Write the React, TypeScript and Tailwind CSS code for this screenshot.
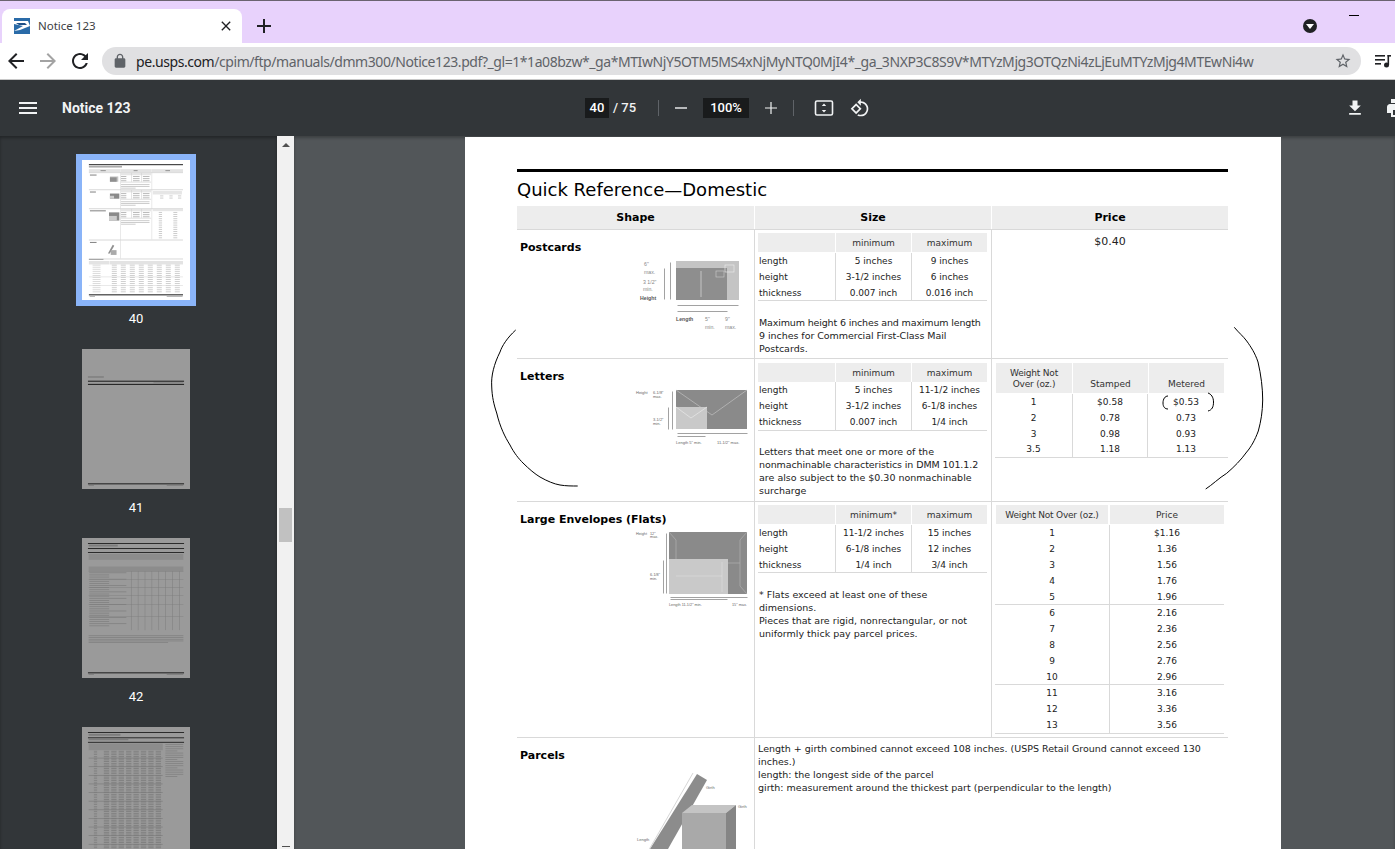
import React from "react";

const P = {
  menu: "M3 18h18v-2H3v2zm0-5h18v-2H3v2zm0-7v2h18V6H3z",
  lock: "M18 8h-1V6c0-2.76-2.24-5-5-5S7 3.24 7 6v2H6c-1.1 0-2 .9-2 2v10c0 1.1.9 2 2 2h12c1.1 0 2-.9 2-2V10c0-1.1-.9-2-2-2zM9 6c0-1.66 1.34-3 3-3s3 1.34 3 3v2H9V6z",
  back: "M20 11H7.83l5.59-5.59L12 4l-8 8 8 8 1.41-1.41L7.83 13H20v-2z",
  forward: "M12 4l-1.41 1.41L16.17 11H4v2h12.17l-5.58 5.59L12 20l8-8z",
  refresh: "M17.65 6.35C16.2 4.9 14.21 4 12 4c-4.42 0-7.99 3.58-7.99 8s3.57 8 7.99 8c3.73 0 6.84-2.55 7.73-6h-2.08c-.82 2.33-3.04 4-5.65 4-3.31 0-6-2.69-6-6s2.69-6 6-6c1.66 0 3.14.69 4.22 1.78L13 11h7V4l-2.35 2.35z",
  star: "M22 9.24l-7.19-.62L12 2 9.19 8.63 2 9.24l5.46 4.73L5.82 21 12 17.27 18.18 21l-1.63-7.03L22 9.24zM12 15.4l-3.76 2.27 1-4.28-3.32-2.88 4.38-.38L12 6.1l1.71 4.04 4.38.38-3.32 2.88 1 4.28L12 15.4z",
  download: "M19 9h-4V3H9v6H5l7 7 7-7zM5 18v2h14v-2H5z",
  print: "M19 8H5c-1.66 0-3 1.34-3 3v6h4v4h12v-4h4v-6c0-1.66-1.34-3-3-3zm-3 11H8v-5h8v5zm3-7c-.55 0-1-.45-1-1s.45-1 1-1 1 .45 1 1-.45 1-1 1zm-1-9H6v4h12V3z",
  rotate: "M7.34 6.41L.86 12.9l6.49 6.48 6.49-6.48-6.5-6.49zM3.69 12.9l3.66-3.66L11 12.9l-3.66 3.66-3.65-3.66zm15.67-6.26C17.61 4.88 15.3 4 13 4V.76L8.76 5 13 9.24V6c1.79 0 3.58.68 4.95 2.05 2.73 2.73 2.73 7.17 0 9.9C16.58 19.32 14.79 20 13 20c-.97 0-1.94-.21-2.84-.61l-1.49 1.49C10.02 21.62 11.51 22 13 22c2.3 0 4.61-.88 6.36-2.64 3.52-3.51 3.52-9.21 0-12.72z",
  plus: "M19 13h-6v6h-2v-6H5v-2h6V5h2v6h6v2z",
  plusThin: "M18 12.6h-5.4V18h-1.2v-5.4H6v-1.2h5.4V6h1.2v5.4H18z",
  minus: "M18 12.7H6v-1.4h12z",
  close: "M19 6.41L17.59 5 12 10.59 6.41 5 5 6.41 10.59 12 5 17.59 6.41 19 12 13.41 17.59 19 19 17.59 13.41 12z",
};

function Ic({ d, s = 24, c = "" }: { d: string; s?: number; c?: string }) {
  return (
    <svg viewBox="0 0 24 24" width={s} height={s} fill="currentColor" className={"shrink-0 " + c}>
      <path d={d} />
    </svg>
  );
}

function Thumb40() {
  const g = "#cfcfcf";
  const lines: React.ReactNode[] = [];
  for (let i = 0; i < 3; i++) {
    const ys = [97, 226, 369][i];
    lines.push(<rect key={"h" + i} x={293} y={ys} width={229} height={18} fill="#e6e6e6" />);
    for (let r = 0; r < 3; r++) {
      lines.push(<rect key={"a" + i + r} x={295} y={ys + 24 + r * 16} width={40} height={7} fill="#b5b5b5" />);
      lines.push(<rect key={"b" + i + r} x={385} y={ys + 24 + r * 16} width={50} height={7} fill="#b5b5b5" />);
      lines.push(<rect key={"c" + i + r} x={460} y={ys + 24 + r * 16} width={50} height={7} fill="#b5b5b5" />);
    }
    lines.push(<rect key={"v" + i} x={373} y={ys} width={4} height={68} fill={g} />);
    lines.push(<rect key={"w" + i} x={449} y={ys} width={4} height={68} fill={g} />);
    lines.push(<rect key={"l" + i} x={293} y={ys + 67} width={229} height={5} fill={g} />);
    for (let r = 0; r < 3; r++) {
      lines.push(<rect key={"p" + i + r} x={295} y={ys + 86 + r * 13} width={r === 2 ? 110 : 215} height={6} fill="#c0c0c0" />);
    }
  }
  const rows: React.ReactNode[] = [];
  for (let r = 0; r < 14; r++) {
    const y = 790 + r * 15.5;
    rows.push(<rect key={"t" + r} x={80} y={y} width={60} height={6} fill="#d2d2d2" />);
    for (let k = 0; k < 8; k++) rows.push(<rect key={"t" + r + k} x={225 + k * 68} y={y} width={38} height={6} fill="#c4c4c4" />);
  }
  return (
    <svg viewBox="0 0 816 1056" width={108} height={140} preserveAspectRatio="none" className="block bg-white blur-[0.3px]">
      <rect x={52} y={32} width={711} height={7} fill="#111" />
      <rect x={52} y={44} width={250} height={13} fill="#aaa" />
      <rect x={52} y={69} width={237} height={23} fill="#e3e3e3" />
      <rect x={290} y={69} width={236} height={23} fill="#e3e3e3" />
      <rect x={527} y={69} width={236} height={23} fill="#e3e3e3" />
      <rect x={140} y={76} width={40} height={8} fill="#999" />
      <rect x={390} y={76} width={30} height={8} fill="#999" />
      <rect x={630} y={76} width={35} height={8} fill="#999" />
      {[92, 221, 364, 600, 743].map((y) => <rect key={y} x={52} y={y} width={711} height={7} fill="#d6d6d6" />)}
      <rect x={289} y={92} width={4} height={651} fill="#d6d6d6" />
      <rect x={526} y={92} width={4} height={508} fill="#d6d6d6" />
      <rect x={60} y={110} width={50} height={7} fill="#777" />
      <rect x={60} y={238} width={45} height={7} fill="#777" />
      <rect x={60} y={380} width={120} height={7} fill="#777" />
      <rect x={60} y={618} width={50} height={7} fill="#777" />
      <rect x={211} y={124} width={63} height={40} fill="#c4c4c4" /><rect x={211} y={131} width={51} height={33} fill="#8f8f8f" />
      <rect x={211} y={253} width={71} height={39} fill="#8a8a8a" /><rect x={211} y={270} width={31} height={22} fill="#ccc" />
      <rect x={204} y={395} width={78} height={62} fill="#8a8a8a" /><rect x={204} y={422} width={59} height={35} fill="#ccc" />
      <polygon points="232,640 244,646 210,705 196,705" fill="#8f8f8f" />
      <rect x={217} y={680} width={44} height={36} fill="#aaa" />
      {lines}
      <rect x={535} y={234} width={220} height={26} fill="#e6e6e6" />
      <rect x={535} y={368} width={228} height={18} fill="#e6e6e6" />
      {Array.from({ length: 13 }).map((_, i) => (
        <React.Fragment key={i}>
          <rect x={580} y={392 + i * 16} width={25} height={6} fill="#c0c0c0" />
          <rect x={690} y={392 + i * 16} width={30} height={6} fill="#c0c0c0" />
        </React.Fragment>
      ))}
      {[0, 1].map((i) => (
        <React.Fragment key={i}>
          <rect x={590} y={268 + i * 16} width={25} height={6} fill="#c0c0c0" />
          <rect x={660} y={268 + i * 16} width={25} height={6} fill="#c0c0c0" />
          <rect x={725} y={268 + i * 16} width={25} height={6} fill="#c0c0c0" />
        </React.Fragment>
      ))}
      <rect x={52} y={746} width={110} height={7} fill="#999" />
      <rect x={52} y={762} width={155} height={26} fill="#e3e3e3" />
      <rect x={210} y={762} width={553} height={26} fill="#e3e3e3" />
      {rows}
      {[880, 945].map((y) => <rect key={y} x={52} y={y} width={711} height={4} fill="#d6d6d6" />)}
      <rect x={52} y={1013} width={711} height={8} fill="#222" />
      <rect x={58} y={1027} width={40} height={6} fill="#aaa" />
      <rect x={640} y={1027} width={120} height={6} fill="#aaa" />
    </svg>
  );
}

function ThumbDim({ page }: { page: 41 | 42 | 43 }) {
  const ink = "#222";
  const soft = "#7c7c7c";
  const parts: React.ReactNode[] = [];
  if (page === 41) {
    parts.push(<rect key="a" x={45} y={206} width={120} height={10} fill={soft} />);
    parts.push(<rect key="b" x={45} y={239} width={726} height={8} fill={ink} />);
    parts.push(<rect key="c" x={45} y={263} width={726} height={8} fill={ink} />);
    parts.push(<rect key="d" x={540} y={252} width={225} height={6} fill={soft} />);
  }
  if (page === 42) {
    [38, 76, 106].forEach((y) => parts.push(<rect key={y} x={45} y={y} width={726} height={7} fill={ink} />));
    parts.push(<rect key="t" x={50} y={50} width={220} height={14} fill={soft} />);
    parts.push(<rect key="h1" x={50} y={120} width={716} height={45} fill="#8c8c8c" />);
    parts.push(<rect key="h2" x={50} y={215} width={716} height={36} fill="#8c8c8c" />);
    for (let i = 0; i < 26; i++) parts.push(<rect key={"l" + i} x={55} y={260 + i * 16} width={i % 3 ? 150 : 280} height={5} fill={soft} />);
    for (let k = 0; k < 8; k++) parts.push(<rect key={"v" + k} x={370 + k * 52} y={250} width={4} height={445} fill="#7f7f7f" />);
    for (let i = 0; i < 6; i++) parts.push(<rect key={"r" + i} x={50} y={[251, 310, 370, 430, 500, 590][i]} width={716} height={3} fill={soft} />);
    for (let i = 0; i < 5; i++) parts.push(<rect key={"x" + i} x={50} y={735 + i * 13} width={i === 4 ? 600 : 716} height={5} fill={soft} />);
  }
  if (page === 43) {
    [38, 78, 112].forEach((y) => parts.push(<rect key={y} x={45} y={y} width={726} height={7} fill={ink} />));
    parts.push(<rect key="t" x={50} y={52} width={240} height={14} fill={soft} />);
    parts.push(<rect key="u" x={50} y={90} width={300} height={10} fill={soft} />);
    parts.push(<rect key="h" x={50} y={125} width={560} height={50} fill="#8c8c8c" />);
    for (let i = 0; i < 60; i++) {
      parts.push(<rect key={"r" + i} x={50} y={180 + i * 13} width={560} height={i % 5 === 4 ? 5 : 0} fill={soft} />);
      for (let k = 0; k < 8; k++) parts.push(<rect key={"c" + i + k} x={165 + k * 56} y={180 + i * 13} width={40} height={6} fill={soft} />);
      parts.push(<rect key={"w" + i} x={90} y={180 + i * 13} width={24} height={5} fill={soft} />);
    }
    for (let i = 0; i < 16; i++) parts.push(<rect key={"s" + i} x={630} y={130 + i * 16} width={i % 4 === 3 ? 90 : 135} height={5} fill={soft} />);
  }
  if (page !== 43) {
    parts.push(<rect key="f" x={45} y={1013} width={726} height={8} fill={ink} />);
    parts.push(<rect key="g" x={50} y={1027} width={40} height={6} fill={soft} />);
    parts.push(<rect key="h3" x={640} y={1027} width={125} height={6} fill={soft} />);
  }
  return (
    <svg viewBox="0 0 816 1056" width={108} height={140} preserveAspectRatio="none" className="block bg-[#9a9a9a] blur-[0.3px]">
      {parts}
    </svg>
  );
}

function Thumb({ n, active, children }: { n?: number; active?: boolean; children: React.ReactNode }) {
  return (
    <div className="ml-[76px] w-[120px] h-[189px] shrink-0 flex flex-col items-center">
      <div className={active ? "border-[6px] border-[#8ab4f8]" : "border-[6px] border-transparent"}>{children}</div>
      {n ? <div className="mt-[5px] h-[16px] leading-[16px] text-[13px] text-white font-['Roboto',sans-serif]">{n}</div> : null}
    </div>
  );
}

const LBL = "pt-[11px] pl-[3px] text-[11px] leading-[14px] font-bold text-black";

function SizeTable({ head, rows, tight }: { head: string; rows: string[][]; tight?: boolean }) {
  return (
    <div className="w-[229px] text-[9px]">
      <div className="flex h-[19px] leading-[20px] text-center text-[#333]">
        <div className="w-[77px] bg-[#ededed] mr-px" />
        <div className="w-[75px] bg-[#ededed] mr-px">{head}</div>
        <div className="w-[75px] bg-[#ededed]">maximum</div>
      </div>
      <div className={(tight ? "" : "mt-px ") + "border-b border-[#d9d9d9]"}>
        {rows.map((r, i) => (
          <div key={i} className={"flex text-[#222] leading-[16px] " + (i === 2 && !tight ? "h-[15px]" : "h-[16px]")}>
            <div className="w-[78px] pl-[1px] border-r border-[#d9d9d9]">{r[0]}</div>
            <div className="w-[76px] text-center border-r border-[#d9d9d9]">{r[1]}</div>
            <div className="w-[75px] text-center">{r[2]}</div>
          </div>
        ))}
      </div>
    </div>
  );
}

function Para({ children, tight }: { children: React.ReactNode; tight?: boolean }) {
  return <div className={(tight ? "mt-[14px]" : "mt-[15px]") + " pl-[1px] leading-[13px] text-[#222] whitespace-nowrap"}>{children}</div>;
}

const flats = [
  [["1", "$1.16"], ["2", "1.36"], ["3", "1.56"], ["4", "1.76"], ["5", "1.96"]],
  [["6", "2.16"], ["7", "2.36"], ["8", "2.56"], ["9", "2.76"], ["10", "2.96"]],
  [["11", "3.16"], ["12", "3.36"], ["13", "3.56"]],
];

export default function App() {
  return (
    <div className="w-full h-[849px] overflow-hidden flex flex-col bg-white font-['Noto_Sans',sans-serif]">
      <div className="h-px bg-[#6b6370]" />
      {/* tab strip */}
      <div className="h-[42px] bg-[#e8d2fc] flex items-end pl-[2px] relative shrink-0">
        <div className="w-[240px] h-[34px] rounded-t-[8px] bg-white flex items-center pl-[12px] pr-[8px]">
          <svg viewBox="0 0 16 16" width={16} height={16} className="shrink-0">
            <rect width="16" height="16" fill="#2a6ba8" />
            <path d="M0 3 H14 L16 8 L6 12 L0 13 L9 8 L0 6 Z" fill="#fff" />
            <path d="M2 5 H11 L13 7 L5 7 Z" fill="#1f4f86" />
          </svg>
          <span className="ml-[8px] text-[11.5px] text-[#3c4043] flex-1">Notice 123</span>
          <Ic d={P.close} s={16} c="text-[#202124]" />
        </div>
        <div className="ml-[10px] mb-[5px] text-[#202124]"><Ic d={P.plus} s={24} /></div>
        <div className="absolute left-[1303px] top-[18px] w-[14px] h-[14px] rounded-full bg-[#202124] flex items-center justify-center">
          <div className="w-0 h-0 border-l-[4px] border-r-[4px] border-t-[5px] border-l-transparent border-r-transparent border-t-white" />
        </div>
        <div className="absolute left-[1349px] top-[14px] w-[10px] h-px bg-black" />
      </div>
      {/* address bar */}
      <div className="h-[37px] shrink-0 bg-white border-b border-[#c8c8c8] flex items-center text-[#202124]">
        <div className="ml-[4px]"><Ic d={P.back} s={24} /></div>
        <div className="ml-[8px] text-[#a3a3a3]"><Ic d={P.forward} s={24} /></div>
        <div className="ml-[8px]"><Ic d={P.refresh} s={24} /></div>
        <div className="ml-[10px] w-[1259px] shrink-0 h-[28px] rounded-full bg-[#e0e0e2] flex items-center pl-[10px]">
          <Ic d={P.lock} s={16} c="text-[#5f6368]" />
          <span className="ml-[8px] text-[14px] tracking-[-0.43px] whitespace-nowrap text-[#5f6368] font-['Noto_Sans',sans-serif]">
            <span className="text-[#202124]">pe.usps.com</span>/cpim/ftp/manuals/dmm300/Notice123.pdf?_gl=1*1a08bzw*_ga*MTIwNjY5OTM5MS4xNjMyNTQ0MjI4*_ga_3NXP3C8S9V*MTYzMjg3OTQzNi4zLjEuMTYzMjg4MTEwNi4w
          </span>
          <div className="flex-1" />
          <div className="mr-[9px] text-[#5f6368]"><Ic d={P.star} s={18} /></div>
        </div>
        <div className="ml-[13px]">
          <svg viewBox="0 0 18 18" width={18} height={18} fill="#202124">
            <rect x="1" y="3" width="10" height="1.6" /><rect x="1" y="7" width="10" height="1.6" /><rect x="1" y="11" width="6" height="1.6" />
            <rect x="13.5" y="3" width="1.6" height="10" /><rect x="13.5" y="3" width="3.5" height="1.6" /><circle cx="12.5" cy="13" r="2.5" />
          </svg>
        </div>
      </div>
      {/* pdf toolbar */}
      <div className="h-[56px] shrink-0 bg-[#323639] flex items-center text-white font-['Roboto',sans-serif] overflow-hidden">
        <div className="ml-[16px]"><Ic d={P.menu} s={24} c="text-[#f1f3f4]" /></div>
        <span className="ml-[22px] w-[523px] shrink-0 text-[14px] font-bold text-[#f1f3f4]">Notice 123</span>
        <span className="w-[24px] shrink-0 h-[20px] bg-[#191b1c] text-center text-[13px] leading-[20px] font-medium">40</span>
        <span className="ml-[4px] w-[25px] shrink-0 text-[13px] text-[#f1f3f4] font-medium">/ 75</span>
        <div className="ml-[20px] w-px h-[16px] bg-[#5f6368] shrink-0" />
        <div className="ml-[10px]"><Ic d={P.minus} s={24} c="text-[#f1f3f4]" /></div>
        <span className="ml-[10px] w-[46px] shrink-0 h-[20px] bg-[#191b1c] text-center text-[13px] leading-[20px] font-medium">100%</span>
        <div className="ml-[10px]"><Ic d={P.plusThin} s={24} c="text-[#f1f3f4]" /></div>
        <div className="ml-[10px] w-px h-[16px] bg-[#5f6368] shrink-0" />
        <div className="ml-[20px]">
          <svg viewBox="0 0 20 20" width={20} height={20} fill="none">
            <rect x="1.5" y="3" width="17" height="14" rx="1.5" stroke="#f1f3f4" strokeWidth="1.6" />
            <path d="M10 5.5 L12.2 8 H7.8 Z M10 14.5 L12.2 12 H7.8 Z" fill="#f1f3f4" />
          </svg>
        </div>
        <div className="ml-[16px]"><Ic d={P.rotate} s={20} c="text-[#f1f3f4]" /></div>
        <div className="ml-[475px]"><Ic d={P.download} s={20} c="text-[#f1f3f4]" /></div>
        <div className="ml-[20px]"><Ic d={P.print} s={24} c="text-[#f1f3f4]" /></div>
      </div>
      {/* body */}
      <div className="flex-1 flex min-h-0 overflow-hidden">
        <div className="w-[277px] shrink-0 bg-[#323639] pt-[18px] flex flex-col overflow-hidden shadow-[inset_0_2px_3px_rgba(0,0,0,0.3)]">
          <Thumb n={40} active><Thumb40 /></Thumb>
          <Thumb n={41}><ThumbDim page={41} /></Thumb>
          <Thumb n={42}><ThumbDim page={42} /></Thumb>
          <Thumb><ThumbDim page={43} /></Thumb>
        </div>
        <div className="w-[17px] shrink-0 bg-[#f1f1f1] flex flex-col items-center pt-[7px]">
          <div className="w-0 h-0 border-l-[4px] border-r-[4px] border-b-[4px] border-l-transparent border-r-transparent border-b-[#505050]" />
          <div className="mt-[361px] w-[13px] h-[34px] bg-[#c1c1c1]" />
          <div className="mt-[304px] w-[8px] h-px bg-[#505050]" />
        </div>
        <div className="flex-1 bg-[#525659] overflow-hidden shadow-[inset_0_2px_3px_rgba(0,0,0,0.25)]">
          <div className="relative ml-[171px] w-[816px] h-[713px] mt-px bg-white pl-[52px] overflow-visible font-['DejaVu_Sans',sans-serif] text-[9.5px]">
            <div className="h-[32px]" />
            <div className="w-[711px] h-[3px] bg-black" />
            <div className="h-[34px] leading-[36px] text-[18px] text-black whitespace-nowrap">Quick Reference—Domestic</div>
            {/* header */}
            <div className="w-[711px] flex h-[24px] border-b border-[#d9d9d9] text-[11px] font-bold text-black leading-[24px] text-center">
              <div className="w-[237px] mr-px bg-[#ededed] h-[23px]">Shape</div>
              <div className="w-[236px] mr-px bg-[#ededed] h-[23px]">Size</div>
              <div className="w-[236px] bg-[#ededed] h-[23px]">Price</div>
            </div>
            {/* postcards */}
            <div className="w-[711px] flex h-[129px] border-b border-[#d9d9d9]">
              <div className="w-[238px] border-r border-[#d9d9d9]">
                <div className={LBL}>Postcards</div>
                <svg viewBox="636 255 110 80" width={110} height={80} className="ml-[119px] block">
                  <rect x="676" y="261" width="63" height="39" fill="#c4c4c4" />
                  <rect x="676" y="268" width="51" height="32" fill="#8e8e8e" />
                  <rect x="725" y="265" width="9" height="7" fill="none" stroke="#eee" strokeWidth="0.6" />
                  <rect x="716" y="271" width="8" height="6" fill="none" stroke="#ccc" strokeWidth="0.6" />
                  <line x1="701" y1="271" x2="701" y2="297" stroke="#ddd" strokeWidth="0.7" />
                  <g stroke="#444" strokeWidth="0.5" transform="translate(0.5,0.5)"><line x1="670" y1="262" x2="670" y2="299" /><line x1="664" y1="268" x2="664" y2="299" /><line x1="677" y1="305" x2="738" y2="305" /><line x1="677" y1="311" x2="727" y2="311" /></g>
                  <g fontFamily="Liberation Sans, sans-serif" fontSize="5.2" fill="#888">
                    <text x="644" y="266">6"</text><text x="644" y="274">max.</text><text x="643" y="284">3 1/2"</text><text x="643" y="291">min.</text>
                    <text x="705" y="321">5"</text><text x="725" y="321">9"</text><text x="705" y="329">min.</text><text x="725" y="329">max.</text>
                    <text x="640" y="300" fontWeight="bold" fill="#555">Height</text><text x="676" y="321" fontWeight="bold" fill="#555">Length</text>
                  </g>
                </svg>
              </div>
              <div className="w-[237px] border-r border-[#d9d9d9] pl-[3px] pt-[3px]">
                <SizeTable head="minimum" rows={[["length", "5 inches", "9 inches"], ["height", "3-1/2 inches", "6 inches"], ["thickness", "0.007 inch", "0.016 inch"]]} />
                <Para><span className="tracking-[-0.15px]">Maximum height 6 inches and maximum length</span><br /><span className="tracking-[-0.05px]">9 inches for Commercial First-Class Mail</span><br />Postcards.</Para>
              </div>
              <div className="w-[236px] text-center text-[11px] leading-[14px] pt-[5px] text-[#222]">$0.40</div>
            </div>
            {/* letters */}
            <div className="w-[711px] flex h-[143px] border-b border-[#d9d9d9]">
              <div className="w-[238px] border-r border-[#d9d9d9]">
                <div className={LBL}>Letters</div>
                <svg viewBox="630 385 120 65" width={120} height={65} className="ml-[113px] block mt-px">
                  <rect x="676" y="390" width="71" height="39" fill="#8a8a8a" />
                  <polyline points="676,390 712,415 747,390" fill="none" stroke="#c9c9c9" strokeWidth="0.6" />
                  <rect x="676" y="407" width="31" height="22" fill="#c9c9c9" />
                  <polyline points="676,407 691,418 707,407" fill="none" stroke="#eee" strokeWidth="0.6" />
                  <g stroke="#444" strokeWidth="0.5" transform="translate(0.5,0.5)"><line x1="672" y1="391" x2="672" y2="429" /><line x1="668" y1="407" x2="668" y2="429" /><line x1="677" y1="433" x2="747" y2="433" /><line x1="677" y1="436" x2="705" y2="436" /></g>
                  <g fontFamily="Liberation Sans, sans-serif" fontSize="4" fill="#666">
                    <text x="636" y="394">Height</text><text x="653" y="394">6-1/8"</text><text x="653" y="398">max.</text>
                    <text x="653" y="421">3-1/2"</text><text x="653" y="425">min.</text><text x="676" y="444">Length 5" min.</text><text x="717" y="444">11-1/2" max.</text>
                  </g>
                </svg>
              </div>
              <div className="w-[237px] border-r border-[#d9d9d9] pl-[3px] pt-[4px]">
                <SizeTable tight head="minimum" rows={[["length", "5 inches", "11-1/2 inches"], ["height", "3-1/2 inches", "6-1/8 inches"], ["thickness", "0.007 inch", "1/4 inch"]]} />
                <Para tight>Letters that meet one or more of the<br /><span className="tracking-[-0.1px]">nonmachinable characteristics in DMM 101.1.2</span><br />are also subject to the $0.30 nonmachinable<br />surcharge</Para>
              </div>
              <div className="w-[236px] pl-[3px] pt-[4px] text-[#222] text-[9px]">
                <div className="flex h-[30px] text-center leading-[11px] ml-px text-[#333]">
                  <div className="w-[76px] mr-px bg-[#ededed] pt-[5px] tracking-[-0.2px]">Weight Not<br />Over (oz.)</div>
                  <div className="w-[75px] mr-px bg-[#ededed] pt-[16px]">Stamped</div>
                  <div className="w-[75px] bg-[#ededed] pt-[16px]">Metered</div>
                </div>
                <div className="w-[233px] mt-px border-b border-[#d9d9d9] text-center">
                  {[["1", "$0.58", "$0.53"], ["2", "0.78", "0.73"], ["3", "0.98", "0.93"], ["3.5", "1.18", "1.13"]].map((r, i) => (
                    <div key={i} className={"flex " + (i === 3 ? "h-[15px] leading-[15px]" : "h-[16px] leading-[16px]")}>
                      <div className="w-[78px] border-r border-[#d9d9d9]">{r[0]}</div>
                      <div className="w-[75px] border-r border-[#d9d9d9]">{r[1]}</div>
                      <div className="w-[76px]">{r[2]}</div>
                    </div>
                  ))}
                </div>
              </div>
            </div>
            {/* flats */}
            <div className="w-[711px] flex h-[236px] border-b border-[#d9d9d9]">
              <div className="w-[238px] border-r border-[#d9d9d9]">
                <div className={LBL}>Large Envelopes (Flats)</div>
                <svg viewBox="630 528 120 84" width={120} height={84} className="ml-[113px] block mt-px">
                  <rect x="669" y="532" width="78" height="62" fill="#8a8a8a" />
                  <polyline points="669,532 676,540 676,586 669,594" fill="none" stroke="#b5b5b5" strokeWidth="0.6" />
                  <polyline points="747,532 740,540 740,586 747,594" fill="none" stroke="#b5b5b5" strokeWidth="0.6" />
                  <line x1="728" y1="563" x2="740" y2="563" stroke="#b5b5b5" strokeWidth="0.6" />
                  <rect x="669" y="559" width="59" height="35" fill="#c9c9c9" />
                  <line x1="676" y1="576" x2="722" y2="576" stroke="#e2e2e2" strokeWidth="0.5" /><line x1="722" y1="562" x2="722" y2="592" stroke="#e2e2e2" strokeWidth="0.5" />
                  <g stroke="#444" strokeWidth="0.5" transform="translate(0.5,0.5)"><line x1="666" y1="533" x2="666" y2="593" /><line x1="663" y1="560" x2="663" y2="593" /><line x1="670" y1="597" x2="747" y2="597" /><line x1="670" y1="599" x2="727" y2="599" /></g>
                  <g fontFamily="Liberation Sans, sans-serif" fontSize="3.8" fill="#666">
                    <text x="636" y="535">Height</text><text x="650" y="535">12"</text><text x="650" y="538">max.</text>
                    <text x="650" y="576">6-1/8"</text><text x="650" y="580">min.</text><text x="669" y="606">Length 11-1/2" min.</text><text x="732" y="606">15" max.</text>
                  </g>
                </svg>
              </div>
              <div className="w-[237px] border-r border-[#d9d9d9] pl-[3px] pt-[3px]">
                <SizeTable head="minimum*" rows={[["length", "11-1/2 inches", "15 inches"], ["height", "6-1/8 inches", "12 inches"], ["thickness", "1/4 inch", "3/4 inch"]]} />
                <Para>* Flats exceed at least one of these<br />dimensions.<br />Pieces that are rigid, nonrectangular, or not<br />uniformly thick pay parcel prices.</Para>
              </div>
              <div className="w-[236px] pl-[3px] pt-[3px] text-[#222] text-[9px]">
                <div className="flex h-[19px] leading-[20px] text-center ml-px text-[#333]">
                  <div className="w-[112px] mr-[2px] bg-[#ededed] tracking-[-0.2px]">Weight Not Over (oz.)</div>
                  <div className="w-[114px] bg-[#ededed]">Price</div>
                </div>
                <div className="w-[229px] mt-px text-center">
                  {flats.map((g, gi) => (
                    <div key={gi} className="border-b border-[#d9d9d9]">
                      {g.map((r, i) => (
                        <div key={r[0]} className={"flex leading-[16px] " + (i === g.length - 1 && gi < 2 ? "h-[15px]" : "h-[16px]")}>
                          <div className="w-[115px] border-r border-[#d9d9d9]">{r[0]}</div>
                          <div className="w-[114px]">{r[1]}</div>
                        </div>
                      ))}
                    </div>
                  ))}
                </div>
              </div>
            </div>
            {/* parcels */}
            <div className="w-[711px] flex h-[111px] overflow-hidden">
              <div className="w-[238px] border-r border-[#d9d9d9]">
                <div className={LBL}>Parcels</div>
                <svg viewBox="625 765 125 100" width={125} height={100} className="ml-[108px] mt-[2px] block">
                  <polygon points="697,774 707,780 668,849 650,849" fill="#8c8c8c" />
                  <line x1="693" y1="773" x2="646" y2="855" stroke="#ccc" strokeWidth="0.8" />
                  <polygon points="682,813 692,805 736,805 726,813" fill="#c4c4c4" />
                  <rect x="682" y="813" width="44" height="50" fill="#a9a9a9" />
                  <polygon points="726,813 736,805 736,860 726,863" fill="#858585" />
                  <g fontFamily="Liberation Sans, sans-serif" fontSize="4" fill="#666">
                    <text x="706" y="789">Girth</text><text x="738" y="808">Girth</text><text x="637" y="841">Length</text>
                  </g>
                </svg>
              </div>
              <div className="pl-[3px] pt-[4px] leading-[13px] text-[#222] whitespace-nowrap">
                Length + girth combined cannot exceed 108 inches. (USPS Retail Ground cannot exceed 130<br />inches.)<br />length: the longest side of the parcel<br />girth: measurement around the thickest part (perpendicular to the length)
              </div>
            </div>
            {/* hand-drawn marks over the page */}
            <svg viewBox="465 137 816 713" width={816} height={713} className="absolute left-0 top-0 pointer-events-none" fill="none" stroke="#000" strokeWidth="1">
              <path d="M515.7 330 C507 338 502 346 500 352 C494 364 491 376 491.7 386 C492 397 494 405 496.7 413 C500 427 505 437 510 445 C514 453 519 459 523 463 C529 469 535 474 540 477 C547 481 554 484 560 485 C566 486 572 486 577.7 486" />
              <path d="M1234.3 327.3 C1239 333 1243 336 1246.7 341 C1251 347 1255 353 1258 362 C1261 375 1262.7 388 1262.7 400 C1262.5 412 1261 421 1258.3 431 C1255 440 1251 447 1246.7 452 C1241 460 1234 467 1226.7 473.3 C1219 478 1212 485 1205.7 489" />
              <path d="M1168 396 C1165 396 1163 399 1163 403 C1163 407 1165 409 1168 409" />
              <path d="M1208 393 C1211 394 1213.5 397 1213.5 402 C1213.5 407 1212 410 1208 411" />
            </svg>
          </div>
        </div>
      </div>
    </div>
  );
}
